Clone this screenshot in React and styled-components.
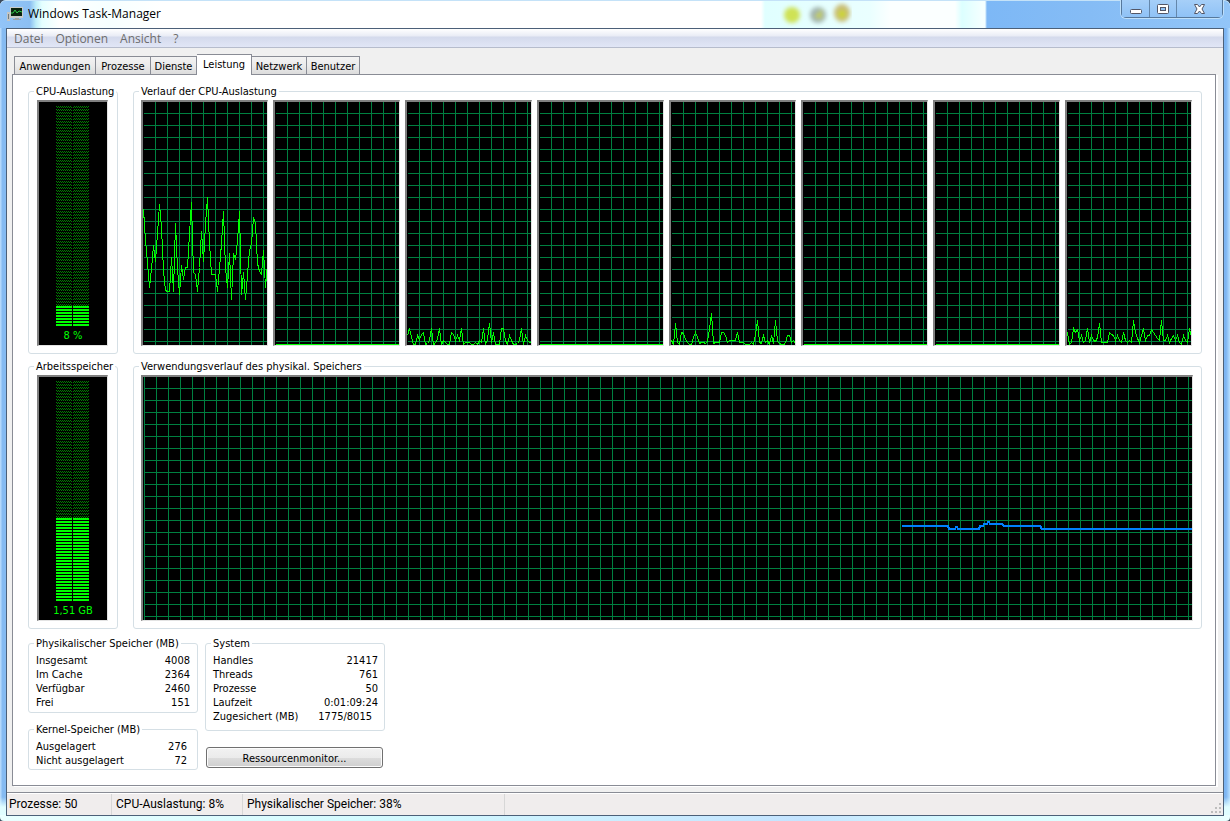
import React, { useState } from 'react';
import styled, { createGlobalStyle } from 'styled-components';

const GlobalStyle = createGlobalStyle`
  * {
    box-sizing: border-box;
  }

  body {
    margin: 0;
    background: #3b4a5c;
  }

  button {
    font: inherit;
    color: inherit;
    padding: 0;
    border: 0;
    background: none;
  }
`;

// Outer glass frame of the window
const Window = styled.div`
  display: flex;
  flex-direction: column;
  min-height: 100vh;
  padding: 0 6px 5px;
  border-radius: 6px 6px 4px 4px;
  font-family: 'DejaVu Sans Condensed', 'DejaVu Sans', sans-serif;
  font-size: 11px;
  line-height: 14px;
  color: #000;
  background:
    linear-gradient(90deg, #eaffff, #d4fbff 30%, #c4e4ff 65%, #d8fdff 80%, #eaffff) 0 100% / 100% 6px no-repeat,
    linear-gradient(transparent calc(100% - 24px), #e0fdff calc(100% - 14px)),
    linear-gradient(90deg, #b4d8fb 0 1px, #86bbf2 2px, #7db5f2 calc(100% - 4px), #b9e0ff);
`;

const TitleBar = styled.header`
  display: flex;
  align-items: flex-start;
  height: 28px;
  margin: 0 -6px;
  padding-left: 7px;
  border-top: 1px solid #c4e2f8;
  border-radius: 6px 6px 0 0;
  background:
    linear-gradient(90deg, transparent 225px, #7db8f6 227px, #85bcf5 330px, #92c5f8) right / 470px 100% no-repeat,
    linear-gradient(90deg, #92c4f8 0, #8cbff2 30px, #bfeef9 36px, #e4ffff 42px, #fff 60px, #f6ffff 110px, #fff 160px, #fff 761px, #e0ffff 765px, #eaffff 870px, #fbffff 890px, #fbffff 955px, #dcffff 962px, #f4ffff 982px);
`;

const AppIcon = styled.svg`
  width: 16px;
  height: 16px;
  margin-top: 5px;
`;

const Title = styled.h1`
  flex: 1;
  margin: 0 0 0 5px;
  font: 400 12px/26px 'Open Sans', sans-serif;
`;

const Backdrop = styled.svg`
  width: 72px;
  height: 26px;
  margin-right: 269px;
`;

const WindowControls = styled.div`
  display: flex;
  height: 18px;
  margin: -1px 7px 0 0;
  border: 1px solid #56789c;
  border-top: 0;
  border-radius: 0 0 5px 5px;
  box-shadow: 0 0 0 1px #bfe0fb;
`;

const ControlButton = styled.button`
  display: flex;
  align-items: center;
  justify-content: center;
  width: ${({ $wide }) => ($wide ? '46px' : '27px')};
  padding-bottom: 1px;
  background: linear-gradient(#a6cff8, #8fc2f6);

  & + & {
    border-left: 1px solid #6487ab;
  }
`;

const Client = styled.main`
  flex: 1;
  display: flex;
  flex-direction: column;
  border: 1px solid #4c6078;
  background: #f0f0f0;
`;

const MenuBar = styled.nav`
  display: flex;
  gap: 12px;
  height: 19px;
  padding-left: 7px;
  border-bottom: 1px solid #b6bccc;
  background: linear-gradient(#fff, #e9ecf5 7px, #d4daec 8px, #e1e6f6);
  font: 12px/18px 'Open Sans', sans-serif;
  color: #6d6d6d;
`;

const MenuItem = styled.button`
  height: 18px;
  padding-top: 2px;
  line-height: 16px;
`;

const TabList = styled.div`
  display: flex;
  align-items: flex-end;
  height: 26px;
  padding-left: 7px;
`;

const Tab = styled.button`
  width: ${({ $width }) => $width}px;
  height: ${({ $active }) => ($active ? 21 : 18)}px;
  margin-bottom: ${({ $active }) => ($active ? -1 : 0)}px;
  padding-top: ${({ $active }) => ($active ? 0 : 2)}px;
  border: 1px solid #898c95;
  border-bottom: 0;
  background: ${({ $active }) => ($active ? '#fff' : 'linear-gradient(#f3f3f3, #ebebeb 50%, #dcdcdc)')};
  z-index: ${({ $active }) => ($active ? 1 : 0)};

  & + & {
    border-left-width: ${({ $active }) => ($active ? '1px' : '0')};
  }
`;

const Panel = styled.section`
  flex: 1;
  display: flex;
  flex-direction: column;
  gap: 5px;
  margin: 0 7px 6px 5px;
  padding: 9px 13px 15px 15px;
  border: 1px solid #898c95;
  box-shadow: 2px 1px 0 #fff;
  background: #fff;
`;

const GraphRow = styled.div`
  flex: 1 1 0;
  display: flex;
  gap: 15px;
`;

const Group = styled.fieldset`
  min-width: 0;
  margin: 0;
  border: 1px solid #d5dfe5;
  border-radius: 3px;
`;

const Legend = styled.legend`
  height: 14px;
  margin-left: -2px;
  padding: 0 2px;
  line-height: 16px;
  white-space: nowrap;
`;

const MeterGroup = styled(Group)`
  display: flex;
  flex: 0 0 90px;
  padding: 2px 9px 7px 8px;

  ${Legend} {
    margin-left: -3px;
  }
`;

const HistoryGroup = styled(Group)`
  display: flex;
  flex: 1;
  gap: 5px;
  padding: 2px ${({ $right }) => $right}px 7px 7px;
`;

const Sunken = styled.div`
  flex: 1;
  display: flex;
  min-width: 0;
  border: 1px solid #e3e3e3;
  border-top: 2px solid #808080;
  border-left: 2px solid #808080;
  background: #000;
`;

const MeterBox = styled(Sunken)`
  flex-direction: column;
  padding: 4px 0 2px;
`;

const Bars = styled.div`
  flex: 1;
  display: flex;
  flex-direction: column;
  width: 33px;
  margin-left: 17px;
`;

const DarkBars = styled.svg`
  flex: 1 1 0;
  width: 33px;
  min-height: 0;
`;

const LitBars = styled.svg`
  flex: none;
  width: 33px;
`;

const MeterValue = styled.output`
  margin-top: 3px;
  text-align: center;
  color: #0f0;
`;

const Plot = styled.svg`
  flex: 1 1 0;
  width: 100%;
  min-width: 0;
  min-height: 0;
`;

const Stats = styled.div`
  display: flex;
  gap: 7px;
  margin-top: 2px;
`;

const StatsColumn = styled.div`
  display: flex;
  flex-direction: column;
  gap: ${({ $gap }) => $gap}px;
  width: ${({ $width }) => $width}px;
`;

const StatsGroup = styled(Group)`
  padding: 4px ${({ $right }) => $right}px ${({ $bottom }) => $bottom}px 7px;
`;

const StatsTable = styled.table`
  width: 100%;
  border-collapse: collapse;
  font-size: inherit;

  th,
  td {
    height: 14px;
    padding: 0;
    line-height: 14px;
    font-weight: 400;
    text-align: left;
    white-space: nowrap;
  }
`;

const Value = styled.td`
  && {
    padding-right: ${({ $inset }) => ($inset ? 6 : 0)}px;
    text-align: right;
  }
`;

const PushButton = styled.button`
  height: 21px;
  margin: 0 2px 0 1px;
  padding-top: 2px;
  border: 1px solid #707070;
  border-radius: 3px;
  background: linear-gradient(#f2f2f2, #ebebeb 50%, #dddddd 50%, #cfcfcf);
  box-shadow: inset 0 0 0 1px #fcfcfc;
`;

const StatusBar = styled.footer`
  display: flex;
  height: 23px;
  border-top: 1px solid #898c95;
  box-shadow: inset 0 1px 0 #fff;
  background: #f0eded;
  font: 12px/23px Roboto, 'Open Sans', sans-serif;
`;

const StatusCell = styled.span`
  width: ${({ $width }) => $width}px;
  margin-top: 1px;
  padding-left: ${({ $first }) => ($first ? 2 : 4)}px;
  border-right: 1px solid #d7d7d7;
  line-height: 21px;
  white-space: nowrap;
`;

const Grip = styled.svg`
  width: 12px;
  height: 12px;
  margin: 9px 0 0 auto;
`;

const TABS = [
  ['Anwendungen', 82],
  ['Prozesse', 55],
  ['Dienste', 46],
  ['Leistung', 55],
  ['Netzwerk', 55],
  ['Benutzer', 53],
];

// One sample every two pixels, measured from the top of the plot
const IDLE = Array(63).fill(242);
const CPU_HISTORY = [
  [107, 138, 160, 185, 166, 143, 159, 131, 102, 125, 168, 188, 189, 189, 155, 189, 121, 166, 192, 163, 177, 165, 165, 131, 100, 170, 172, 189, 165, 129, 159, 121, 95, 141, 172, 172, 172, 189, 166, 141, 109, 166, 185, 151, 197, 151, 157, 138, 109, 192, 170, 197, 172, 148, 141, 115, 121, 161, 169, 172, 148, 185, 161],
  IDLE,
  [233, 226, 235, 242, 242, 233, 237, 232, 230, 242, 241, 238, 226, 242, 241, 236, 226, 242, 238, 240, 242, 242, 230, 232, 238, 233, 238, 226, 242, 240, 240, 240, 242, 242, 240, 242, 238, 240, 226, 242, 237, 221, 240, 230, 242, 242, 242, 226, 226, 238, 242, 233, 238, 242, 242, 241, 238, 226, 242, 233, 238, 240, 240],
  IDLE,
  [238, 242, 221, 240, 242, 230, 231, 237, 240, 242, 242, 235, 230, 235, 241, 240, 240, 241, 239, 226, 211, 241, 240, 240, 240, 230, 230, 233, 240, 238, 238, 238, 238, 230, 240, 240, 240, 242, 242, 242, 240, 242, 232, 218, 240, 241, 233, 240, 238, 242, 233, 241, 218, 239, 241, 242, 242, 241, 233, 233, 240, 238, 241],
  IDLE,
  IDLE,
  [230, 242, 240, 226, 230, 227, 238, 233, 240, 238, 226, 240, 233, 238, 239, 235, 221, 240, 240, 240, 240, 230, 232, 233, 238, 233, 238, 240, 230, 238, 240, 238, 240, 218, 230, 236, 240, 233, 226, 238, 233, 233, 227, 230, 233, 236, 238, 218, 238, 238, 233, 240, 236, 233, 238, 233, 240, 242, 233, 238, 240, 226, 235],
];

const MEMORY_HISTORY =
  '759,149 805,149 806,152 812,152 813,150 814,150 815,152 836,152 837,149 840,149 841,147 844,147 845,145 846,145 847,147 859,147 861,149 897,149 899,152 1049,152';

const toPoints = (samples) => samples.map((y, i) => `${i * 2 + 0.5},${y + 0.5}`).join(' ');

const History = ({ id, label, gridX, width, points, color, stroke }) => (
  <Sunken>
    <Plot role="img" aria-label={label} shapeRendering="crispEdges">
      <defs>
        <pattern id={id} x={gridX} y="11" width="12" height="12" patternUnits="userSpaceOnUse">
          <path d="M0 0H12V1H1V12H0z" fill="#008040" />
        </pattern>
      </defs>
      <rect x="1" width="100%" height="100%" fill={`url(#${id})`} />
      <svg width="100%" height="100%" viewBox={`0 0 ${width} 243`} preserveAspectRatio="none">
        <polyline points={points} fill="none" stroke={color} strokeWidth={stroke} vectorEffect="non-scaling-stroke" />
      </svg>
    </Plot>
  </Sunken>
);

const Meter = ({ id, title, value, lit }) => (
  <MeterGroup>
    <Legend>{title}</Legend>
    <MeterBox>
      <Bars>
        <DarkBars shapeRendering="crispEdges" aria-hidden="true">
          <defs>
            <pattern id={id} width="2" height="3" patternUnits="userSpaceOnUse">
              <path d="M0 0h1v1h-1zM1 1h1v1h-1z" fill="#008000" />
            </pattern>
          </defs>
          <rect width="33" height="100%" fill={`url(#${id})`} />
          <rect x="16" width="1" height="100%" fill="#000" />
        </DarkBars>
        <LitBars height={lit * 3 - 1} shapeRendering="crispEdges" aria-hidden="true">
          {Array.from({ length: lit }, (_, i) => (
            <path key={i} d={`M0 ${i * 3}h16v2h-16zM17 ${i * 3}h16v2h-16z`} fill="#0f0" />
          ))}
        </LitBars>
      </Bars>
      <MeterValue>{value}</MeterValue>
    </MeterBox>
  </MeterGroup>
);

const StatsBox = ({ title, rows, right = 7, bottom = 2 }) => (
  <StatsGroup $right={right} $bottom={bottom}>
    <Legend>{title}</Legend>
    <StatsTable>
      <tbody>
        {rows.map(([name, value, inset]) => (
          <tr key={name}>
            <th scope="row">{name}</th>
            <Value $inset={inset}>{value}</Value>
          </tr>
        ))}
      </tbody>
    </StatsTable>
  </StatsGroup>
);

const App = () => {
  const [tab, setTab] = useState('Leistung');

  return (
    <>
      <GlobalStyle />
      <Window>
        <TitleBar>
          <AppIcon viewBox="0 0 16 16" aria-hidden="true">
            <path d="M0 6h3v9H0z" fill="#c3c5c4" />
            <path d="M1 8h1v5H1z" fill="#747b7e" />
            <path d="M3 1h13v11H3z" fill="#c9cccb" />
            <path d="M4 2h11v8H4z" fill="#0b2410" />
            <path d="M4 7h2l2-3 2 3 2-2 3 1" fill="none" stroke="#2fc647" />
            <path d="M8 12h4v1h2v1H6v-1h2z" fill="#9da2a4" />
          </AppIcon>
          <Title>Windows Task-Manager</Title>
          {/* Icons of the window behind, seen through the glass */}
          <Backdrop viewBox="0 0 72 26" aria-hidden="true">
            <defs>
              <filter id="glass" x="-50%" y="-50%" width="200%" height="200%">
                <feGaussianBlur stdDeviation="2" />
              </filter>
            </defs>
            <g filter="url(#glass)">
              <circle cx="12" cy="14" r="8" fill="#cfe255" />
              <circle cx="38" cy="14" r="8" fill="#a3b5b0" />
              <path d="M34 16l8-8v10z" fill="#c4cf4f" />
              <ellipse cx="62" cy="12" rx="8" ry="9" fill="#c9bc75" />
              <circle cx="62" cy="13" r="4" fill="#ccd530" />
            </g>
          </Backdrop>
          <WindowControls>
            <ControlButton aria-label="Minimieren">
              <svg width="12" height="16" viewBox="0 0 12 16">
                <rect x="0.5" y="9.5" width="11" height="4" rx="1" fill="#fff" stroke="#535666" />
              </svg>
            </ControlButton>
            <ControlButton aria-label="Maximieren">
              <svg width="12" height="16" viewBox="0 0 12 16">
                <rect x="0.5" y="4.5" width="11" height="9" rx="1" fill="#fff" stroke="#535666" />
                <rect x="3.5" y="7.5" width="5" height="3" fill="#8fc2f6" stroke="#535666" />
              </svg>
            </ControlButton>
            <ControlButton $wide aria-label="Schließen">
              <svg width="13" height="16" viewBox="0 0 13 16">
                <path d="M1.500 4.500h3l2 2.500 2-2.500h3L9 9l2.500 4.500h-3l-2-2.500-2 2.500h-3L4 9z" fill="#fff" stroke="#535666" />
              </svg>
            </ControlButton>
          </WindowControls>
        </TitleBar>

        <Client>
          <MenuBar aria-label="Menü">
            <MenuItem>Datei</MenuItem>
            <MenuItem>Optionen</MenuItem>
            <MenuItem>Ansicht</MenuItem>
            <MenuItem>?</MenuItem>
          </MenuBar>

          <TabList role="tablist">
            {TABS.map(([name, width]) => (
              <Tab
                key={name}
                role="tab"
                aria-selected={name === tab}
                $active={name === tab}
                $width={width}
                onClick={() => setTab(name)}
              >
                {name}
              </Tab>
            ))}
          </TabList>

          <Panel role="tabpanel">
            <GraphRow>
              <Meter id="cpu-meter" title="CPU-Auslastung" value="8 %" lit={7} />
              <HistoryGroup $right={9}>
                <Legend>Verlauf der CPU-Auslastung</Legend>
                {CPU_HISTORY.map((samples, i) => (
                  <History
                    key={i}
                    id={`cpu-grid-${i}`}
                    label={`CPU ${i}`}
                    gridX={12}
                    width={124}
                    points={toPoints(samples)}
                    color="#0f0"
                    stroke={samples === IDLE ? 2 : 1}
                  />
                ))}
              </HistoryGroup>
            </GraphRow>

            <GraphRow>
              <Meter id="memory-meter" title="Arbeitsspeicher" value="1,51 GB" lit={28} />
              <HistoryGroup $right={8}>
                <Legend>Verwendungsverlauf des physikal. Speichers</Legend>
                <History
                  id="memory-grid"
                  label="Arbeitsspeicher"
                  gridX={1}
                  width={1049}
                  points={MEMORY_HISTORY}
                  color="#0080ff"
                  stroke={2}
                />
              </HistoryGroup>
            </GraphRow>

            <Stats>
              <StatsColumn $width={170} $gap={9}>
                <StatsBox
                  title="Physikalischer Speicher (MB)"
                  rows={[
                    ['Insgesamt', '4008'],
                    ['Im Cache', '2364'],
                    ['Verfügbar', '2460'],
                    ['Frei', '151'],
                  ]}
                />
                <StatsBox
                  title="Kernel-Speicher (MB)"
                  right={10}
                  bottom={1}
                  rows={[
                    ['Ausgelagert', '276'],
                    ['Nicht ausgelagert', '72'],
                  ]}
                />
              </StatsColumn>
              <StatsColumn $width={180} $gap={16}>
                <StatsBox
                  title="System"
                  right={6}
                  bottom={6}
                  rows={[
                    ['Handles', '21417'],
                    ['Threads', '761'],
                    ['Prozesse', '50'],
                    ['Laufzeit', '0:01:09:24'],
                    ['Zugesichert (MB)', '1775/8015', true],
                  ]}
                />
                <PushButton>Ressourcenmonitor...</PushButton>
              </StatsColumn>
            </Stats>
          </Panel>

          <StatusBar>
            <StatusCell $first $width={105}>Prozesse: 50</StatusCell>
            <StatusCell $width={131}>CPU-Auslastung: 8%</StatusCell>
            <StatusCell $width={262}>Physikalischer Speicher: 38%</StatusCell>
            <Grip viewBox="0 0 12 12" aria-hidden="true">
              <path d="M8 1h2v2H8zM4 5h2v2H4zM8 5h2v2H8zM0 9h2v2H0zM4 9h2v2H4zM8 9h2v2H8z" fill="#bdbdbd" />
            </Grip>
          </StatusBar>
        </Client>
      </Window>
    </>
  );
};

export default App;
